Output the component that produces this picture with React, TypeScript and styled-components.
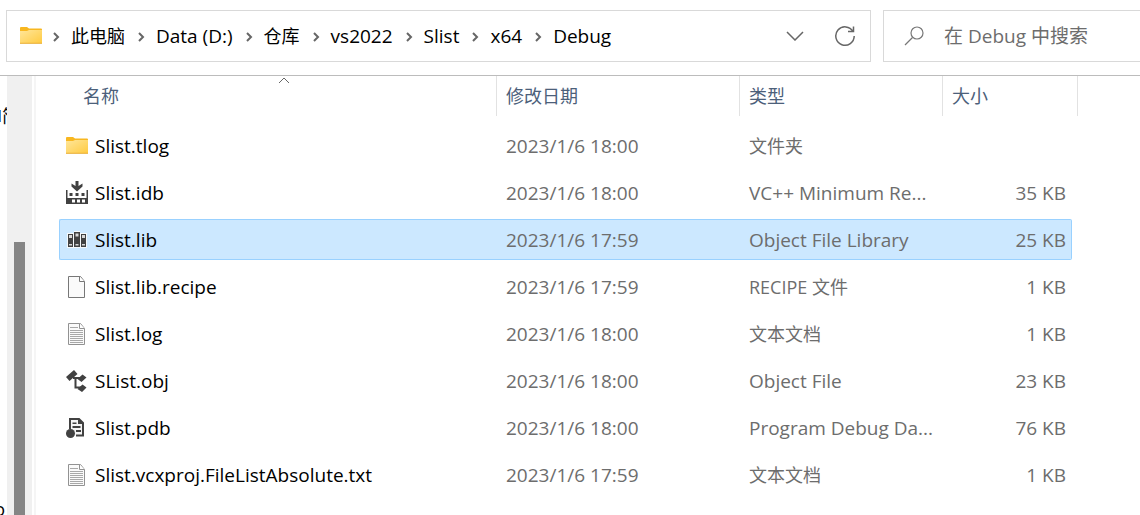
import React from "react";
import styled, { createGlobalStyle } from "styled-components";

const GlobalStyle = createGlobalStyle`
  * { box-sizing: border-box; }
  body {
    margin: 0;
    overflow: hidden;
    background: #ffffff;
    color: #000000;
    font-family: "Open Sans", "Noto Sans CJK SC", sans-serif;
    font-size: 19px;
    line-height: 24px;
  }
  button, input {
    font: inherit;
    color: inherit;
    background: none;
    border: 0;
    padding: 0;
    margin: 0;
  }
`;

const Window = styled.div`
  display: flex;
  flex-direction: column;
  height: 100vh;
`;

const TopBar = styled.header`
  display: flex;
  gap: 12px;
  padding: 10px 0 13px 6px;
  border-bottom: 1px solid #bcbcbc;
`;

const AddressBar = styled.nav`
  display: flex;
  flex: 1;
  align-items: center;
  height: 52px;
  padding: 0 13px 0 12px;
  border: 1px solid #d9d9d9;
`;

const Crumbs = styled.ol`
  display: flex;
  flex: 1;
  align-items: center;
  margin: 0;
  padding: 0;
  list-style: none;
`;

const Crumb = styled.li`
  display: flex;
  align-items: center;
  white-space: nowrap;
  & + & { padding-left: 3px; }
`;

const CrumbArrow = styled.svg`
  width: 8px;
  height: 10px;
  margin: 2px 11px 0 9px;
`;

const CrumbLink = styled.a<{ $cjk?: boolean }>`
  color: inherit;
  text-decoration: none;
  font-size: ${(p) => (p.$cjk ? 18 : 19)}px;
`;

const IconButton = styled.button`
  display: flex;
  align-items: center;
  justify-content: center;
  width: 24px;
  height: 24px;
  margin-left: 26px;
`;

const SearchBox = styled.label`
  display: flex;
  flex: 0 0 257px;
  align-items: center;
  gap: 18px;
  min-width: 0;
  height: 52px;
  padding-left: 20px;
  border: 1px solid #d9d9d9;
  border-right: 0;
`;

const SearchInput = styled.input`
  flex: 1;
  width: 0;
  min-width: 0;
  height: 28px;
  outline: 0;
  &::placeholder { color: #6d6d6d; opacity: 1; }
`;

const Body = styled.div`
  display: flex;
  flex: 1;
  min-height: 0;
`;

const TreePane = styled.aside`
  display: flex;
  flex: 0 0 7px;
  flex-direction: column;
  justify-content: space-between;
  overflow: hidden;
  padding-top: 34px;
  font-size: 18px;
`;

const TreeItem = styled.span<{ $end?: boolean }>`
  align-self: ${(p) => (p.$end ? "flex-end" : "flex-start")};
  padding: ${(p) => (p.$end ? "0 2px 0 0" : "0 0 0 1px")};
  border-left: ${(p) => (p.$end ? "0" : "1px solid #3a8fd8")};
  line-height: 12px;
  white-space: nowrap;
`;

const ScrollTrack = styled.div`
  flex: 0 0 25px;
  padding: 166px 0 0 7px;
  background: #f0f0f0;
`;

const ScrollThumb = styled.div`
  width: 11px;
  height: 100%;
  background: #858585;
`;

const Content = styled.main`
  flex: 1;
  min-width: 0;
  margin-left: 2px;
  padding: 0 62px 0 23px;
  border-left: 2px solid #f5f5f5;
`;

const FileTable = styled.table`
  width: 100%;
  border-collapse: separate;
  border-spacing: 0;
  table-layout: fixed;
`;

const NameCol = styled.col``;
const DateCol = styled.col`width: 243px;`;
const TypeCol = styled.col`width: 203px;`;
const SizeCol = styled.col`width: 135px;`;

const HeadCell = styled.th<{ $first?: boolean }>`
  position: relative;
  height: 40px;
  padding: 0 0 0 ${(p) => (p.$first ? 24 : 9)}px;
  border-right: 1px solid #e2e2e2;
  color: #4c607a;
  font-size: 18px;
  font-weight: 400;
  text-align: left;
`;

const SortMark = styled.svg`
  position: absolute;
  top: 1px;
  left: 50%;
  width: 12px;
  height: 7px;
`;

const Spacer = styled.tr`
  height: 6px;
`;

const Row = styled.tr<{ $selected?: boolean }>`
  --fill: ${(p) => (p.$selected ? "#cce8ff" : "transparent")};
  --edge: ${(p) => (p.$selected ? "#99d1ff" : "transparent")};
`;

const Cell = styled.td<{ $align?: "right" }>`
  height: 47px;
  padding: 3px 0;
  color: #6d6d6d;
  text-align: ${(p) => p.$align ?? "left"};
`;

const Fill = styled.div<{ $kind: "first" | "middle" | "last"; $cjk?: boolean }>`
  display: flex;
  align-items: center;
  justify-content: ${(p) => (p.$kind === "last" ? "flex-end" : "flex-start")};
  height: 41px;
  margin-right: ${(p) => (p.$kind === "last" ? 6 : 0)}px;
  padding: ${(p) => (p.$kind === "first" ? "0 0 0 5px" : p.$kind === "last" ? "0 5px 0 0" : "0 12px 0 9px")};
  background: var(--fill);
  border: 1px solid var(--edge);
  border-width: ${(p) => (p.$kind === "first" ? "1px 0 1px 1px" : p.$kind === "last" ? "1px 1px 1px 0" : "1px 0")};
  border-radius: ${(p) => (p.$kind === "first" ? "2px 0 0 2px" : p.$kind === "last" ? "0 2px 2px 0" : "0")};
  font-size: ${(p) => (p.$cjk ? 18 : 19)}px;
  white-space: nowrap;
`;

const FileName = styled.span`
  margin-left: 6px;
  color: #000000;
`;

const FileIcon = styled.svg`
  flex: none;
  width: 24px;
  height: 24px;
`;

function FolderIcon() {
  return (
    <FileIcon viewBox="0 0 24 24" aria-hidden="true">
      <defs>
        <linearGradient id="folder" x1="0" y1="0" x2="1" y2="1">
          <stop offset="0" stopColor="#ffe69a" />
          <stop offset="1" stopColor="#ffcb42" />
        </linearGradient>
      </defs>
      <path d="M1 4q0-1 1-1h6l2 1.500h12q1 0 1 1v6H1z" fill="#f8b720" />
      <path d="M1 7h7l2-1h13v13H1z" fill="url(#folder)" />
      <path d="M1 19.300h22" stroke="#e9ac2c" />
    </FileIcon>
  );
}

function IdbIcon() {
  return (
    <FileIcon viewBox="0 0 24 24" aria-hidden="true">
      <path d="M1 9v14h22V9h-1.500v8h-19V9z" fill="#414141" />
      <path d="M10.500 0h3v5l4-2.500v3L12 10.500 6.500 5.500v-3l4 2.500z" fill="#414141" />
      <path d="M4.500 12h3v3h-3zM10.500 12h3v3h-3zM16.500 12h3v3h-3z" fill="#414141" />
      <path d="M7 18.500h3v3H7zM12 18.500h3v3h-3zM17 18.500h3v3h-3z" fill="#ffffff" />
    </FileIcon>
  );
}

function LibIcon() {
  return (
    <FileIcon viewBox="0 0 24 24" aria-hidden="true">
      <path d="M2 5h7V3h6v2h7v15H2z" fill="#f5f8fa" />
      <path d="M3 6h5v13H3zM9 4h6v15H9zM16 6h5v13h-5z" fill="#414141" />
      <path d="M4 7h3v3H4zM10.500 5.500h3v3h-3zM17 7h3v3h-3zM4 16h3v1.500H4zM10.500 16h3v1.500h-3zM17 16h3v1.500h-3z" fill="#d8d8d8" />
    </FileIcon>
  );
}

function PageIcon({ lines }: { lines?: boolean }) {
  return (
    <FileIcon viewBox="0 0 24 24" aria-hidden="true">
      <path d="M3.500 1.500h12l4 5v16h-16z" fill="#fafafa" stroke={lines ? "#929292" : "#777777"} />
      <path d="M14.500 1.500v5h5" fill="#ffffff" stroke={lines ? "#929292" : "#777777"} />
      {lines && (
        <path
          d="M5 5.500h8M5 8.500h13M5 10.500h13M5 12.500h13M5 14.500h13M5 16.500h13M5 18.500h13M5 20.500h13"
          stroke="#a8a8a8"
        />
      )}
    </FileIcon>
  );
}

function ObjIcon() {
  return (
    <FileIcon viewBox="0 0 24 24" aria-hidden="true">
      <path d="M1 8l8-7 3.500 4-8 7zM12.500 10l5-4.500 4 3-5 4.500zM12.500 20l5-4.500 4 3L17 23z" fill="#414141" />
      <path d="M8 9h7M10.500 9v9.500H16" fill="none" stroke="#414141" strokeWidth="2" />
    </FileIcon>
  );
}

function PdbIcon() {
  return (
    <FileIcon viewBox="0 0 24 24" aria-hidden="true">
      <path d="M5 13V3h9l4 4v12.500h-7" fill="#f4f4f4" stroke="#414141" strokeWidth="2" />
      <path d="M13 2v6h6zM7.500 6.500h4V8h-4zM7.500 10h8v2h-8zM11 14h5v2h-5z" fill="#414141" />
      <circle cx="5.500" cy="17.500" r="4.500" fill="#414141" />
    </FileIcon>
  );
}

const icons = {
  folder: <FolderIcon />,
  idb: <IdbIcon />,
  lib: <LibIcon />,
  page: <PageIcon />,
  text: <PageIcon lines />,
  obj: <ObjIcon />,
  pdb: <PdbIcon />,
};

interface FileEntry {
  icon: keyof typeof icons;
  name: string;
  date: string;
  type: string;
  size: string;
  cjk?: boolean;
  selected?: boolean;
}

const files: FileEntry[] = [
  { icon: "folder", name: "Slist.tlog", date: "2023/1/6 18:00", type: "文件夹", size: "", cjk: true },
  { icon: "idb", name: "Slist.idb", date: "2023/1/6 18:00", type: "VC++ Minimum Re...", size: "35 KB" },
  { icon: "lib", name: "Slist.lib", date: "2023/1/6 17:59", type: "Object File Library", size: "25 KB", selected: true },
  { icon: "page", name: "Slist.lib.recipe", date: "2023/1/6 17:59", type: "RECIPE 文件", size: "1 KB", cjk: true },
  { icon: "text", name: "Slist.log", date: "2023/1/6 18:00", type: "文本文档", size: "1 KB", cjk: true },
  { icon: "obj", name: "SList.obj", date: "2023/1/6 18:00", type: "Object File", size: "23 KB" },
  { icon: "pdb", name: "Slist.pdb", date: "2023/1/6 18:00", type: "Program Debug Da...", size: "76 KB" },
  { icon: "text", name: "Slist.vcxproj.FileListAbsolute.txt", date: "2023/1/6 17:59", type: "文本文档", size: "1 KB", cjk: true },
];

const crumbs = [
  { label: "此电脑", cjk: true },
  { label: "Data (D:)" },
  { label: "仓库", cjk: true },
  { label: "vs2022" },
  { label: "Slist" },
  { label: "x64" },
  { label: "Debug" },
];

export default function App() {
  return (
    <>
      <GlobalStyle />
      <Window>
        <TopBar>
          <AddressBar>
            <FolderIcon />
            <Crumbs>
              {crumbs.map((c) => (
                <Crumb key={c.label}>
                  <CrumbArrow viewBox="0 0 8 10" aria-hidden="true">
                    <path d="M2 1l4 4-4 4" fill="none" stroke="#666666" strokeWidth="2" />
                  </CrumbArrow>
                  <CrumbLink href="#" $cjk={c.cjk}>{c.label}</CrumbLink>
                </Crumb>
              ))}
            </Crumbs>
            <IconButton aria-label="以前的位置">
              <svg width="18" height="10" viewBox="0 0 18 10">
                <path d="M1 1l8 8 8-8" fill="none" stroke="#666666" strokeWidth="1.500" />
              </svg>
            </IconButton>
            <IconButton aria-label="刷新">
              <svg width="22" height="22" viewBox="0 0 22 22">
                <path d="M19 6.500A9.200 9.200 0 1 0 20.200 11M19.500 1.500v5H14" fill="none" stroke="#666666" strokeWidth="1.500" />
              </svg>
            </IconButton>
          </AddressBar>
          <SearchBox>
            <svg width="22" height="22" viewBox="0 0 22 22" aria-hidden="true">
              <circle cx="13" cy="8" r="6" fill="none" stroke="#777777" strokeWidth="1.200" />
              <path d="M8.500 12.500L1 20" stroke="#777777" strokeWidth="1.200" />
            </svg>
            <SearchInput type="text" aria-label="搜索" placeholder="在 Debug 中搜索" />
          </SearchBox>
        </TopBar>
        <Body>
          <TreePane>
            <TreeItem>简</TreeItem>
            <TreeItem $end>o</TreeItem>
          </TreePane>
          <ScrollTrack>
            <ScrollThumb />
          </ScrollTrack>
          <Content>
            <FileTable>
              <colgroup>
                <NameCol />
                <DateCol />
                <TypeCol />
                <SizeCol />
              </colgroup>
              <thead>
                <tr>
                  <HeadCell scope="col" $first>
                    名称
                    <SortMark viewBox="0 0 12 7" aria-hidden="true">
                      <path d="M1 6l5-5 5 5" fill="none" stroke="#666666" />
                    </SortMark>
                  </HeadCell>
                  <HeadCell scope="col">修改日期</HeadCell>
                  <HeadCell scope="col">类型</HeadCell>
                  <HeadCell scope="col">大小</HeadCell>
                </tr>
              </thead>
              <tbody>
                <Spacer aria-hidden="true" />
                {files.map((f) => (
                  <Row key={f.name} $selected={f.selected} aria-selected={f.selected}>
                    <Cell>
                      <Fill $kind="first">
                        {icons[f.icon]}
                        <FileName>{f.name}</FileName>
                      </Fill>
                    </Cell>
                    <Cell>
                      <Fill $kind="middle">{f.date}</Fill>
                    </Cell>
                    <Cell>
                      <Fill $kind="middle" $cjk={f.cjk}>{f.type}</Fill>
                    </Cell>
                    <Cell $align="right">
                      <Fill $kind="last">{f.size}</Fill>
                    </Cell>
                  </Row>
                ))}
              </tbody>
            </FileTable>
          </Content>
        </Body>
      </Window>
    </>
  );
}
